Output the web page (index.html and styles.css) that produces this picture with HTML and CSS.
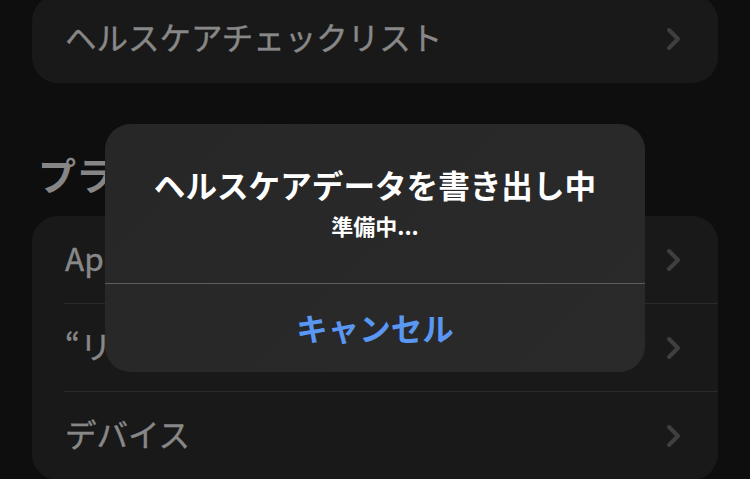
FILE: index.html
```html
<!DOCTYPE html>
<html lang="ja">
<head>
    <meta charset="UTF-8">
    <meta name="viewport" content="width=device-width, initial-scale=1">
    <title>ヘルスケア</title>
    <link rel="stylesheet" href="styles.css">
</head>
<body>
    <div class="page">
        <div class="group group-top">
            <div class="row">
                <span class="label">ヘルスケアチェックリスト</span>
                <svg class="chev" width="15" height="24" viewBox="0 0 15 24"><path d="M3 3 L12 12 L3 21" fill="none" stroke="#3f3f3f" stroke-width="4" stroke-linecap="round" stroke-linejoin="round"/></svg>
            </div>
        </div>

        <h2 class="section-title">プライバシー</h2>

        <div class="group">
            <div class="row">
                <span class="label">Appとサービス</span>
                <svg class="chev" width="15" height="24" viewBox="0 0 15 24"><path d="M3 3 L12 12 L3 21" fill="none" stroke="#3f3f3f" stroke-width="4" stroke-linecap="round" stroke-linejoin="round"/></svg>
            </div>
            <div class="row">
                <span class="label">“リサーチ”調査</span>
                <svg class="chev" width="15" height="24" viewBox="0 0 15 24"><path d="M3 3 L12 12 L3 21" fill="none" stroke="#3f3f3f" stroke-width="4" stroke-linecap="round" stroke-linejoin="round"/></svg>
            </div>
            <div class="row">
                <span class="label">デバイス</span>
                <svg class="chev" width="15" height="24" viewBox="0 0 15 24"><path d="M3 3 L12 12 L3 21" fill="none" stroke="#3f3f3f" stroke-width="4" stroke-linecap="round" stroke-linejoin="round"/></svg>
            </div>
        </div>
    </div>

    <!-- 書き出し中のアラート -->
    <div class="alert">
        <div class="alert-body">
            <div class="alert-title">ヘルスケアデータを書き出し中</div>
            <div class="alert-msg">準備中...</div>
        </div>
        <div class="alert-btn">キャンセル</div>
    </div>
</body>
</html>
```

FILE: styles.css
```css
body {
    margin: 0;
    padding: 0;
    background: #0e0e0e;
    font-family: "Noto Sans CJK JP", "Noto Sans", sans-serif;
    overflow: hidden;
}
.page {
    padding: 0 32px;
    margin-top: -5px;
}
.group {
    background: #191919;
    border-radius: 26px;
    padding-left: 32px;
}
.row {
    height: 87px;
    display: flex;
    align-items: center;
    justify-content: space-between;
    padding-right: 37px;
    border-bottom: 1px solid #2a2a2a;
}
.row:last-child {
    border-bottom: none;
    height: 88px;
}
.label {
    color: #888;
    font-size: 31.5px;
    line-height: 1;
    padding-left: 1px;
    margin-bottom: 4px;
    white-space: nowrap;
    -webkit-text-stroke: 0.4px #888;
}
.chev {
    display: block;
    flex-shrink: 0;
}
.section-title {
    margin: 0;
    height: 133px;
    display: flex;
    align-items: center;
    padding-left: 6px;
    padding-top: 48px;
    box-sizing: border-box;
    color: #868686;
    font-size: 38px;
    font-weight: 700;
}
.alert {
    position: absolute;
    left: 105px;
    top: 124px;
    width: 540px;
    background: linear-gradient(135deg, #272727 0%, #2a2a2a 100%);
    border-radius: 26px;
    color: #fff;
    text-align: center;
    overflow: hidden;
}
.alert-body {
    padding: 40px 20px 0;
    height: 160px;
    box-sizing: border-box;
    border-bottom: 1px solid #5c5c5c;
}
.alert-title {
    font-size: 31.6px;
    font-weight: 700;
    line-height: 40px;
}
.alert-msg {
    font-size: 22px;
    font-weight: 700;
    line-height: 28px;
    margin-top: 7px;
}
.alert-btn {
    height: 88px;
    display: flex;
    align-items: center;
    justify-content: center;
    color: #5a97f2;
    font-size: 31.5px;
    font-weight: 700;
    padding-bottom: 2px;
    box-sizing: border-box;
}
```
